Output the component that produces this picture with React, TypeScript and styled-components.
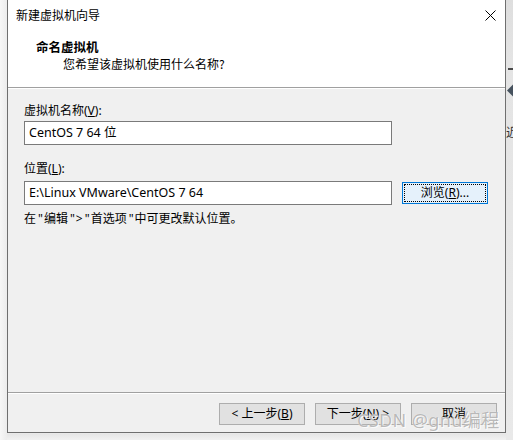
import React from 'react';
import styled, { createGlobalStyle } from 'styled-components';

const GlobalStyle = createGlobalStyle`
  html, body {
    margin: 0;
    padding: 0;
    background: #f3f3f3;
  }

  body {
    font-family: "Noto Sans", "Noto Sans CJK SC", sans-serif;
    font-size: 12px;
    color: #000;
  }
`;

const Page = styled.div`
  position: relative;
  display: flex;
  width: 513px;
  height: 440px;
  overflow: hidden;
  background: linear-gradient(#f3f3f3 0, #f3f3f3 432px, #e6e6e6 434px, #f1f1f1 440px);
`;

const LeftShadow = styled.div`
  width: 7px;
  flex: none;
  background: linear-gradient(to right, #f7f7f7, #ececec);
`;

const Window = styled.div`
  display: flex;
  flex-direction: column;
  width: 499px;
  height: 433px;
  box-sizing: border-box;
  flex: none;
  border: 1px solid #6f6f6f;
  border-top: none;
  background: #f0f0f0;
`;

const TitleBar = styled.div`
  display: flex;
  align-items: center;
  justify-content: space-between;
  height: 30px;
  padding: 0 9px 0 8px;
  background: #fff;
`;

const TitleText = styled.span`
  font-family: "Noto Sans CJK SC", sans-serif;
  font-size: 12px;
  line-height: 16px;
`;

const Header = styled.div`
  display: flex;
  flex-direction: column;
  height: 57px;
  padding-left: 28px;
  background: #fff;
  border-bottom: 1px solid #a0a0a0;
  box-shadow: 0 1px 0 #fff;
`;

const HeaderTitle = styled.div`
  margin-top: 9px;
  font-family: "Noto Sans CJK SC", sans-serif;
  font-weight: 700;
  font-size: 12.5px;
  line-height: 16px;
`;

const HeaderSub = styled.div`
  margin-top: 1px;
  padding-left: 27px;
  font-family: "Noto Sans CJK SC", sans-serif;
  line-height: 16px;
`;

const Content = styled.div`
  flex: 1;
  display: flex;
  flex-direction: column;
  padding: 15px 0 0 16px;
`;

const Label = styled.div<{ $gap: number }>`
  line-height: 16px;
  margin-bottom: ${p => p.$gap}px;
`;

const Row = styled.div`
  display: flex;
  align-items: center;
  gap: 10px;
`;

const TextBox = styled.div`
  width: 368px;
  height: 24px;
  box-sizing: border-box;
  border: 1px solid #7a7a7a;
  background: #fff;
  padding-left: 4px;
  line-height: 22px;
  font-size: 12.5px;
`;

const Spacer = styled.div<{ $h: number }>`
  height: ${p => p.$h}px;
  flex: none;
`;

const Hint = styled.div`
  margin-top: 6px;
  line-height: 16px;
`;

const Quote = styled.span`
  padding: 0 1px 0 2px;
`;

const Footer = styled.div`
  display: flex;
  justify-content: flex-end;
  gap: 10px;
  height: 40px;
  padding: 10px 8px 0 0;
  box-sizing: border-box;
  border-top: 1px solid #a0a0a0;
  box-shadow: inset 0 1px 0 #fff;
`;

const Button = styled.div<{ $focused?: boolean }>`
  position: relative;
  display: flex;
  align-items: center;
  justify-content: center;
  width: 86px;
  height: 22px;
  box-sizing: border-box;
  border: 1px solid ${p => (p.$focused ? '#0078d7' : '#adadad')};
  background: ${p => (p.$focused ? '#e5f1fb' : '#e1e1e1')};
  line-height: 16px;

  &::after {
    content: '';
    display: ${p => (p.$focused ? 'block' : 'none')};
    position: absolute;
    inset: 1px;
    border: 1px dotted #000;
  }
`;

const Key = styled.span`
  text-decoration: underline;
`;

const RightStrip = styled.div`
  position: relative;
  flex: 1;
  background: linear-gradient(#dedede, #e4e4e4 60px, #e9e9e9);
  overflow: hidden;
`;

const StripArt = styled.svg`
  display: block;
`;

const StripGlyph = styled.span`
  position: absolute;
  left: 0;
  top: 124px;
  font-family: "Noto Sans CJK SC", sans-serif;
  font-size: 12px;
  line-height: 16px;
  color: #333;
`;

const Watermark = styled.div`
  position: absolute;
  left: 357px;
  top: 408px;
  font-family: "Noto Sans", "Noto Sans CJK SC", sans-serif;
  font-size: 18px;
  line-height: 24px;
  letter-spacing: 0.4px;
  color: rgba(140, 140, 140, 0.6);
  text-shadow: 0 0 1px #fff, 1px 1px 0 rgba(255, 255, 255, 0.8);
  pointer-events: none;
`;

const CloseIcon = () => (
  <svg width="11" height="11" viewBox="0 0 11 11">
    <path d="M0.5 0.5 L10.5 10.5 M10.5 0.5 L0.5 10.5" stroke="#000" strokeWidth="1" />
  </svg>
);

const App: React.FC = () => {
  return (
    <Page>
      <GlobalStyle />
      <LeftShadow />
      <Window>
        <TitleBar>
          <TitleText>新建虚拟机向导</TitleText>
          <CloseIcon />
        </TitleBar>
        <Header>
          <HeaderTitle>命名虚拟机</HeaderTitle>
          <HeaderSub>您希望该虚拟机使用什么名称?</HeaderSub>
        </Header>
        <Content>
          <Label $gap={2}>
            虚拟机名称(<Key>V</Key>):
          </Label>
          <TextBox>CentOS 7 64 位</TextBox>
          <Spacer $h={16} />
          <Label $gap={4}>
            位置(<Key>L</Key>):
          </Label>
          <Row>
            <TextBox>E:\Linux VMware\CentOS 7 64</TextBox>
            <Button $focused>
              浏览(<Key>R</Key>)...
            </Button>
          </Row>
          <Hint>
            在<Quote>"</Quote>编辑<Quote>"</Quote>&gt;<Quote>"</Quote>首选项<Quote>"</Quote>中可更改默认位置。
          </Hint>
        </Content>
        <Footer>
          <Button>
            &lt; 上一步(<Key>B</Key>)
          </Button>
          <Button>
            下一步(<Key>N</Key>) &gt;
          </Button>
          <Button>取消</Button>
        </Footer>
      </Window>
      <RightStrip>
        <StripArt width="7" height="100" viewBox="0 0 7 100">
          <rect x="2" y="68" width="5" height="2" fill="#4a4a4a" />
          <path d="M1 90.5 L7 84.5 L7 96.5 Z" fill="#46525e" />
        </StripArt>
        <StripGlyph>近</StripGlyph>
      </RightStrip>
      <Watermark>CSDN @gnu编程</Watermark>
    </Page>
  );
};

export default App;
